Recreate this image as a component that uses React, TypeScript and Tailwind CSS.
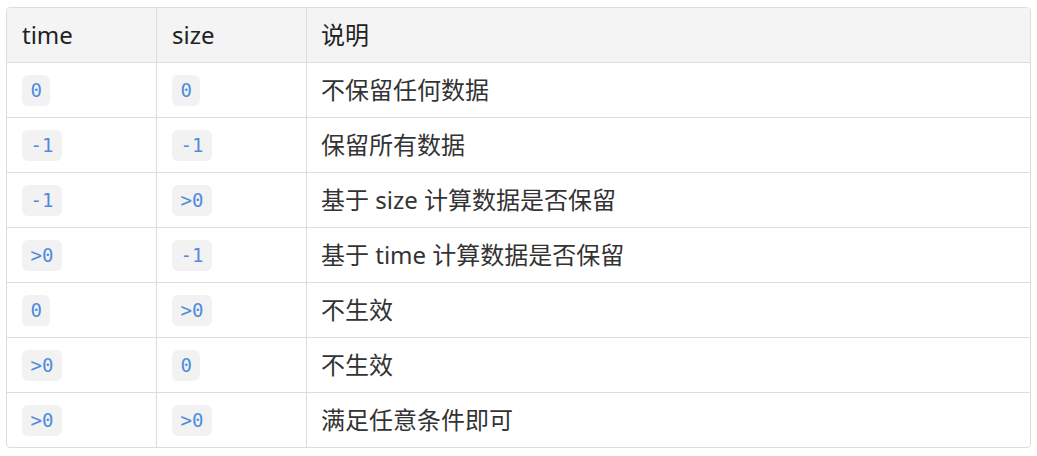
const rows: [string, string, string][] = [
  ["0", "0", "不保留任何数据"],
  ["-1", "-1", "保留所有数据"],
  ["-1", ">0", "基于 size 计算数据是否保留"],
  [">0", "-1", "基于 time 计算数据是否保留"],
  ["0", ">0", "不生效"],
  [">0", "0", "不生效"],
  [">0", ">0", "满足任意条件即可"],
];

function Code({ children }: { children: string }) {
  return (
    <code className="inline-block h-[31px] rounded-[6px] bg-[#f2f2f3] px-[8.5px] font-['DejaVu_Sans_Mono',monospace] text-[19px] leading-[31px] text-[#4f8cdc]">
      {children}
    </code>
  );
}

export default function App() {
  return (
    <div className="min-h-screen bg-white pt-[7px] px-[6px] font-['Noto_Sans','Noto_Sans_CJK_SC',sans-serif]">
      <div className="overflow-hidden rounded-[4px] border border-[#dddddd]">
        <div className="grid h-[54px] grid-cols-[149px_150px_1fr] bg-[#f4f4f4] text-[24px] text-[#222]">
          <div className="flex items-center pl-[15px]">time</div>
          <div className="flex items-center border-l border-[#dddddd] pl-[15px]">size</div>
          <div className="flex items-center border-l border-[#dddddd] pl-[14px]">说明</div>
        </div>
        {rows.map((r, i) => (
          <div
            key={i}
            className="grid h-[55px] grid-cols-[149px_150px_1fr] border-t border-[#dddddd] text-[24px] text-[#333]"
          >
            <div className="flex items-center pl-[15px]">
              <Code>{r[0]}</Code>
            </div>
            <div className="flex items-center border-l border-[#dddddd] pl-[15px]">
              <Code>{r[1]}</Code>
            </div>
            <div className="flex items-center border-l border-[#dddddd] pl-[14px]">{r[2]}</div>
          </div>
        ))}
      </div>
    </div>
  );
}
